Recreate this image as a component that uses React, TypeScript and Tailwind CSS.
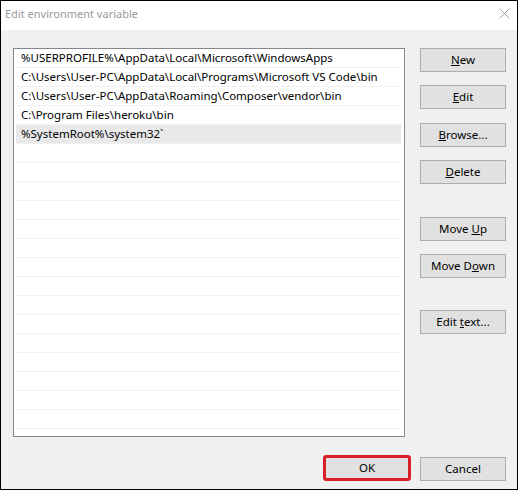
import React from "react";

const rows = [
  "%USERPROFILE%\\AppData\\Local\\Microsoft\\WindowsApps",
  "C:\\Users\\User-PC\\AppData\\Local\\Programs\\Microsoft VS Code\\bin",
  "C:\\Users\\User-PC\\AppData\\Roaming\\Composer\\vendor\\bin",
  "C:\\Program Files\\heroku\\bin",
  "%SystemRoot%\\system32`",
];

function Btn({ children, className = "" }: { children: React.ReactNode; className?: string }) {
  return (
    <div
      className={
        "w-[86px] h-[24px] bg-[#e1e1e1] border border-[#adadad] flex items-center justify-center text-[11.5px] text-black " +
        className
      }
    >
      {children}
    </div>
  );
}

export default function App() {
  const all = Array.from({ length: 20 }, (_, i) => rows[i] ?? "");
  return (
    <div
      className="w-[518px] h-[490px] border border-black flex flex-col bg-[#f0f0f0]"
      style={{ fontFamily: '"Segoe UI", "Noto Sans", sans-serif' }}
    >
      <div className="h-[29px] bg-white flex items-center justify-between pl-[4px] pr-[7px] shrink-0">
        <span className="text-[11px] text-[#9a9a9a] mt-[-2px]">Edit environment variable</span>
        <svg width="11" height="11" viewBox="0 0 11 11" className="mt-[-5px]">
          <path d="M0.5 0.5 L10.5 10.5 M10.5 0.5 L0.5 10.5" stroke="#a0a0a0" strokeWidth="1" />
        </svg>
      </div>
      <div className="flex-1 flex flex-col">
        <div className="flex mt-[18px]">
          <div className="ml-[12px] w-[392px] h-[389px] bg-white border border-[#828790] pl-[2px] pr-[3px]">
            {all.map((t, i) => (
              <div
                key={i}
                className={
                  "h-[19px] border-b border-[#f0f0f0] flex items-center pl-[5px] text-[11.5px] text-black whitespace-nowrap " +
                  (i === 4 ? "bg-[#e9e9e9]" : "")
                }
              >
                {t}
              </div>
            ))}
          </div>
          <div className="ml-[15px] flex flex-col">
            <Btn>
              <span className="underline">N</span>ew
            </Btn>
            <Btn className="mt-[13px]">
              <span className="underline">E</span>dit
            </Btn>
            <Btn className="mt-[14px]">
              <span className="underline">B</span>rowse...
            </Btn>
            <Btn className="mt-[13px]">
              <span className="underline">D</span>elete
            </Btn>
            <Btn className="mt-[33px]">
              Move&nbsp;<span className="underline">U</span>p
            </Btn>
            <Btn className="mt-[13px]">
              Move D<span className="underline">o</span>wn
            </Btn>
            <Btn className="mt-[32px]">
              Edit&nbsp;<span className="underline">t</span>ext...
            </Btn>
          </div>
        </div>
        <div className="flex mt-[18px] ml-[322px] items-start">
          <div className="w-[88px] h-[26px] border-[3px] border-[#d9202a] rounded-[3px] bg-[#e1e1e1] flex items-center justify-center text-[11.5px] text-black">
            OK
          </div>
          <Btn className="ml-[9px] mt-[2px]">Cancel</Btn>
        </div>
      </div>
    </div>
  );
}
